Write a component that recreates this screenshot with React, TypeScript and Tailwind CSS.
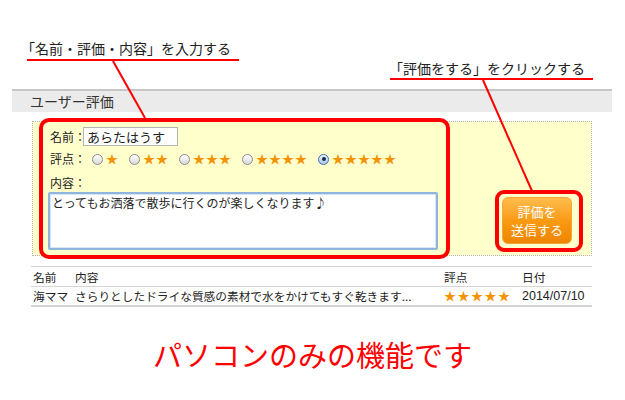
import React from "react";

const Radio = ({ checked = false }: { checked?: boolean }) =>
  checked ? (
    <span className="flex h-[11px] w-[11px] shrink-0 items-center justify-center rounded-full border border-[#3f6fa8] bg-gradient-to-b from-[#eaf3ff] to-[#a9c8ec]">
      <span className="h-[4px] w-[4px] rounded-full bg-[#1b2c44]" />
    </span>
  ) : (
    <span className="h-[11px] w-[11px] shrink-0 rounded-full border border-[#8c8c8c] bg-gradient-to-b from-[#ffffff] to-[#d9d9d9]" />
  );

const Stars = ({ n, className = "" }: { n: number; className?: string }) => (
  <span className={`text-[#f39200] ${className}`}>{"★".repeat(n)}</span>
);

export default function App() {
  const options = [1, 2, 3, 4, 5];

  return (
    <div className="relative h-[400px] w-[625px] overflow-hidden bg-white font-['Noto_Sans_CJK_JP',sans-serif] text-[#222]">
      <div className="pl-[12px] pt-[89px]">
        {/* section header */}
        <div className="h-[23px] w-[600px] border-t-2 border-[#c6c6c6] bg-[#ebebeb] pl-[18px] text-[14px] leading-[21px] text-[#333]">
          ユーザー評価
        </div>

        {/* review form */}
        <div className="ml-[20px] mt-[9px] flex h-[135px] w-[560px] border border-dotted border-[#b3b3c6] bg-[#ffffcc]">
          <div className="pl-[15px] pt-[5px] text-[12px]">
            <div className="flex h-[19px] items-center pl-[2px]">
              <span className="w-[33px] whitespace-nowrap">名前：</span>
              <div className="flex h-[19px] w-[95px] items-center border border-[#b4b4b4] bg-white px-[3px] text-[13px]">
                あらたはうす
              </div>
            </div>

            <div className="mt-[5px] flex h-[16px] items-center pl-[2px]">
              <span className="w-[42px] whitespace-nowrap">評点：</span>
              {options.map((n) => (
                <span key={n} className="mr-[10px] flex items-center">
                  <Radio checked={n === 5} />
                  <Stars n={n} className="ml-[3px] text-[12px] leading-[16px] tracking-[1px]" />
                </span>
              ))}
            </div>

            <div className="mt-[8px] h-[16px] pl-[2px] leading-[16px]">内容：</div>
            <div className="mt-[1px] h-[58px] w-[390px] rounded-[2px] border-2 border-[#8fb5df] bg-white px-[2px] pt-[1px] text-[12px] leading-[16px] shadow-[inset_0_0_0_1px_#d6e6f7]">
              とってもお洒落で散歩に行くのが楽しくなります♪
            </div>
          </div>

          <div className="mb-[11px] ml-auto mr-[19px] self-end">
            <button className="flex h-[47px] w-[70px] flex-col items-center justify-center rounded-[6px] border border-[#f3a43a] bg-gradient-to-b from-[#ffbd4a] via-[#f99a12] to-[#ef8500] text-[13px] leading-[18px] text-white">
              <span>評価を</span>
              <span>送信する</span>
            </button>
          </div>
        </div>

        {/* review list */}
        <div className="ml-[19px] mt-[10px] w-[561px] text-[11.7px]">
          <div className="flex h-[20px] items-center border-t border-[#d4d4d4]">
            <span className="w-[44px] pl-[2px]">名前</span>
            <span className="w-[369px]">内容</span>
            <span className="w-[78px]">評点</span>
            <span>日付</span>
          </div>
          <div className="flex h-[21px] items-center border-b-2 border-t border-[#d4d4d4]">
            <span className="w-[44px] whitespace-nowrap pl-[2px]">海ママ</span>
            <span className="w-[369px] whitespace-nowrap">
              さらりとしたドライな質感の素材で水をかけてもすぐ乾きます...
            </span>
            <Stars n={5} className="w-[78px] text-[12px] tracking-[1.5px]" />
            <span className="font-['Liberation_Sans',sans-serif] text-[12.5px]">2014/07/10</span>
          </div>
        </div>
      </div>

      <div className="mt-[29px] text-center text-[29px] leading-[36px] text-[#ff0000]">
        パソコンのみの機能です
      </div>

      {/* annotations */}
      <div className="absolute left-[21px] top-[38px] whitespace-nowrap text-[14px] leading-[20px] text-[#222]">
        「名前・評価・内容」を入力する
      </div>
      <div className="absolute left-[27px] top-[59px] h-[2px] w-[212px] bg-[#f00]" />
      <div className="absolute left-[389px] top-[58px] whitespace-nowrap text-[14px] leading-[20px] text-[#222]">
        「評価をする」をクリックする
      </div>
      <div className="absolute left-[390px] top-[78px] h-[2px] w-[203px] bg-[#f00]" />

      <svg className="pointer-events-none absolute left-0 top-0" width="625" height="400">
        <line x1="113" y1="61" x2="145" y2="118" stroke="#f00" strokeWidth="2" />
        <line x1="483" y1="80" x2="532" y2="191" stroke="#f00" strokeWidth="2" />
      </svg>

      <div className="absolute left-[39px] top-[118px] h-[141px] w-[411px] rounded-[10px] border-4 border-[#f00]" />
      <div className="absolute left-[495px] top-[190px] h-[62px] w-[88px] rounded-[9px] border-4 border-[#f00]" />
    </div>
  );
}
